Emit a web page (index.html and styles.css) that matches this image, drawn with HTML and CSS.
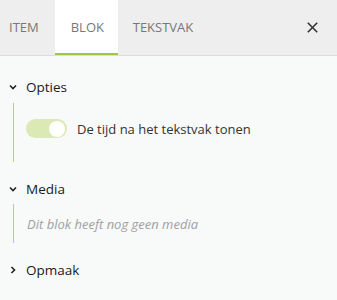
FILE: index.html
```html
<!DOCTYPE html>
<html>
<head>
<meta charset="utf-8">
<link rel="stylesheet" href="styles.css">
</head>
<body>
<div class="panel">
  <div class="tabs">
    <div class="tab">ITEM</div>
    <div class="tab active">BLOK</div>
    <div class="tab">TEKSTVAK</div>
    <div class="spacer"></div>
    <div class="close">
      <svg width="11" height="11" viewBox="0 0 11 11"><path d="M0.8 0.8L10.2 10.2M10.2 0.8L0.8 10.2" stroke="#333" stroke-width="1.6" fill="none"/></svg>
    </div>
  </div>
  <div class="content">
    <div class="section">
      <div class="head">
        <svg class="chev" width="8" height="6" viewBox="0 0 8 6"><path d="M1 1.5L4 4.5L7 1.5" stroke="#222" stroke-width="1.6" fill="none"/></svg>
        <span>Opties</span>
      </div>
      <div class="body opties">
        <div class="row">
          <div class="toggle"><div class="knob"></div></div>
          <span class="label">De tijd na het tekstvak tonen</span>
        </div>
      </div>
    </div>
    <div class="section">
      <div class="head">
        <svg class="chev" width="8" height="6" viewBox="0 0 8 6"><path d="M1 1.5L4 4.5L7 1.5" stroke="#222" stroke-width="1.6" fill="none"/></svg>
        <span>Media</span>
      </div>
      <div class="body media">
        <span class="empty">Dit blok heeft nog geen media</span>
      </div>
    </div>
    <div class="section">
      <div class="head">
        <svg class="chev" width="8" height="8" viewBox="0 0 8 8"><path d="M2.5 1L5.5 4L2.5 7" stroke="#222" stroke-width="1.6" fill="none"/></svg>
        <span>Opmaak</span>
      </div>
    </div>
  </div>
</div>
</body>
</html>
```
FILE: styles.css
```css
html, body { margin: 0; padding: 0; }
body {
  font-family: "Open Sans", sans-serif;
  background: #f8f9f9;
  width: 337px;
  height: 300px;
  overflow: hidden;
}
.tabs {
  display: flex;
  align-items: stretch;
  height: 55px;
  background: #eeeeee;
  border-bottom: 1px solid #dcdcdc;
}
.tab {
  display: flex;
  align-items: center;
  padding: 0 16px 0 9px;
  font-size: 13px;
  color: #777;
  box-sizing: border-box;
  border-bottom: 2px solid transparent;
}
.tab.active {
  background: #fff;
  border-bottom-color: #9dc93a;
  padding: 0 15px 0 16px;
  width: 63px;
}
.tab:nth-child(3) { padding-left: 15px; }
.spacer { flex: 1; }
.close {
  display: flex;
  align-items: center;
  padding: 0 19px 0 0;
}
.content { padding: 21px 0 0 9px; }
.head {
  display: flex;
  align-items: center;
  height: 20px;
  font-size: 13.5px;
  color: #1a1a1a;
}
.chev { width: 8px; margin-right: 9px; }
.body {
  margin-left: 4px;
  border-left: 1px solid #b9d36e;
}
.opties { height: 59px; margin-top: 6px; box-sizing: border-box; padding-top: 16px; }
.row { display: flex; align-items: center; padding-left: 12px; }
.toggle {
  width: 41px;
  height: 19px;
  border-radius: 10px;
  background: #dbeab5;
  position: relative;
  margin-right: 10px;
}
.knob {
  position: absolute;
  right: 2px;
  top: 1.5px;
  width: 16px;
  height: 16px;
  border-radius: 50%;
  background: #fff;
}
.label { font-size: 13px; color: #333; }
.section + .section { margin-top: 17px; }
.media { height: 39px; margin-top: 5px; display: flex; align-items: center; padding-left: 13px; }
.empty { font-size: 13px; font-style: italic; color: #a0a0a0; }
```
